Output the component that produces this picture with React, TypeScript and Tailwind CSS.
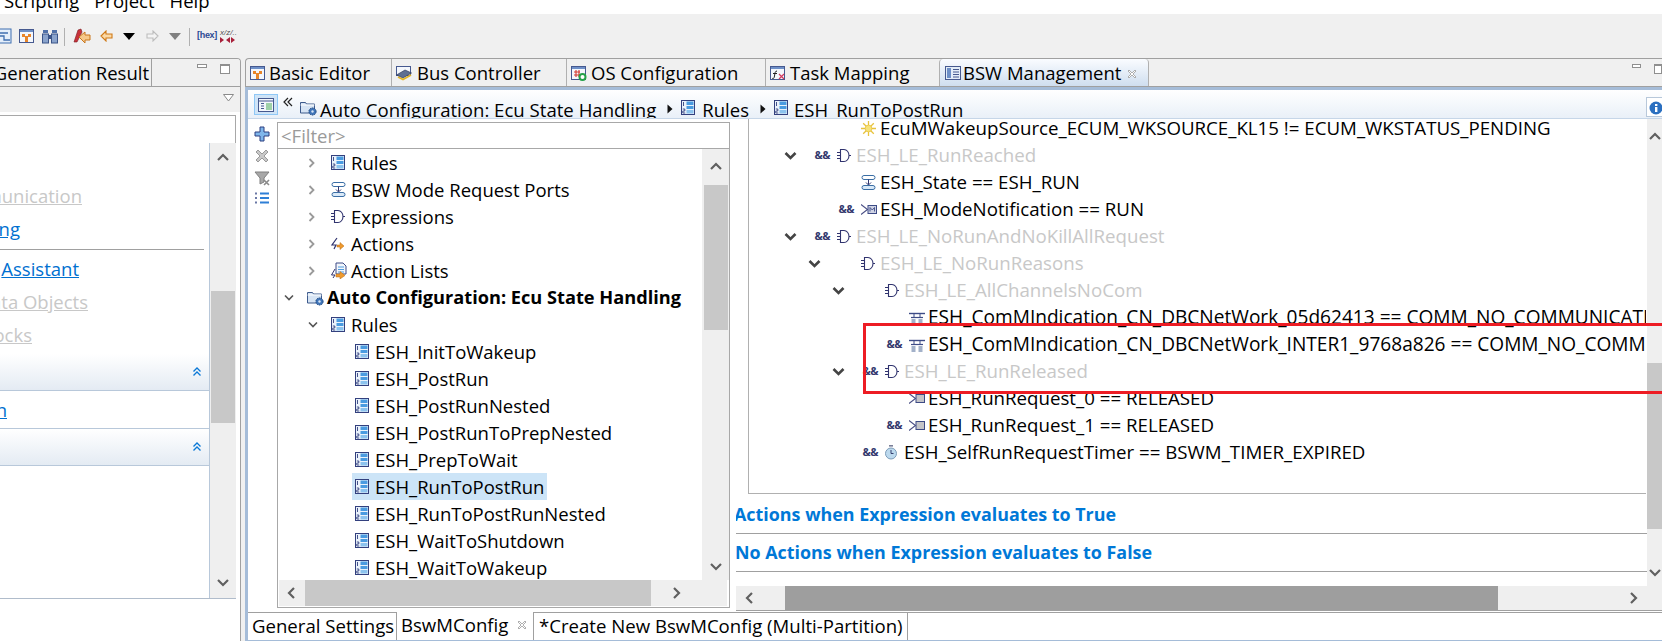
import React from "react";

const NAVY = "#30336e";

function Chevron({ dir, className = "" }: { dir: "up" | "down" | "left" | "right"; className?: string }) {
  const paths = {
    up: "M1 8 L6 3 L11 8",
    down: "M1 3 L6 8 L11 3",
    left: "M8 1 L3 6 L8 11",
    right: "M4 1 L9 6 L4 11",
  };
  return (
    <svg width="12" height="12" viewBox="0 0 12 12" className={className}>
      <path d={paths[dir]} fill="none" stroke="currentColor" strokeWidth="2.2" />
    </svg>
  );
}

function RuleIcon() {
  return (
    <svg width="14" height="15" viewBox="0 0 14 15">
      <rect x="0.5" y="0.5" width="13" height="14" fill="#eaf2fb" stroke="#33407e" />
      <path d="M2.5 2v4M1.8 9h2v2h-2v2h2.4" stroke="#33407e" fill="none" strokeWidth="0.9" />
      <rect x="5.5" y="1.5" width="7" height="3.5" fill="#4a9be0" />
      <rect x="5.5" y="6" width="7" height="3" fill="#4a9be0" />
      <rect x="5.5" y="10" width="7" height="3.5" fill="#8cc3ee" />
    </svg>
  );
}

function GateIcon() {
  return (
    <svg width="14" height="15" viewBox="0 0 14 15">
      <path d="M3.5 1.5h3.5a5 6 0 0 1 0 12h-3.5z M0 4.5h3.5M0 10.5h3.5M0 7.5h3.5M11.5 7.5h2.5" fill="none" stroke={NAVY} strokeWidth="1.1" />
    </svg>
  );
}

function ModeIcon() {
  return (
    <svg width="15" height="15" viewBox="0 0 15 15">
      <rect x="1" y="0.5" width="13" height="4" rx="2" fill="#fff" stroke="#3a6ea5" />
      <rect x="1" y="10.5" width="13" height="4" rx="2" fill="#d9e9f8" stroke="#3a6ea5" />
      <path d="M7.5 4.5v5M5 7.5l2.5 2.5 2.5-2.5" fill="none" stroke="#30356e" />
    </svg>
  );
}

function ActionIcon() {
  return (
    <svg width="14" height="14" viewBox="0 0 14 14">
      <path d="M6 1 L1 8 H5 L3 12" fill="none" stroke={NAVY} strokeWidth="1.2" />
      <path d="M6 8h3V5.5l4 3.5-4 3.5V10H6z" fill="#ef9a2e" stroke="#b86a10" strokeWidth="0.5" />
    </svg>
  );
}

function ActionListIcon() {
  return (
    <svg width="16" height="17" viewBox="0 0 16 17">
      <path d="M5 1h7l3 3v8H5z" fill="#f2f6fc" stroke="#3d4b86" />
      <path d="M7 5h6M7 7.5h6M7 10h6" stroke="#4f9bdc" />
      <path d="M4 7 L0.5 13 H4 L2 16" fill="none" stroke={NAVY} />
      <path d="M5 12h4V9.5l5 4-5 3.5V15H5z" fill="#ef9a2e" stroke="#b86a10" strokeWidth="0.5" />
    </svg>
  );
}

function FolderIcon() {
  return (
    <svg width="17" height="16" viewBox="0 0 17 16">
      <path d="M0.5 2.5h5l1 1.5h8v9h-14z" fill="#d6e4f4" stroke="#3d5a8c" />
      <path d="M0.5 5h14" stroke="#fff" />
      <circle cx="12.5" cy="11.5" r="3.6" fill="#3f74b8" stroke="#234a80" strokeDasharray="1.5 0.8" />
      <circle cx="12.5" cy="11.5" r="1.2" fill="#d6e4f4" />
    </svg>
  );
}

function SunIcon() {
  return (
    <svg width="15" height="15" viewBox="0 0 15 15">
      <path d="M7.5 0v15M0 7.5h15M2.2 2.2l10.6 10.6M12.8 2.2L2.2 12.8" stroke="#e8c33e" strokeWidth="1.3" />
      <circle cx="7.5" cy="7.5" r="3.4" fill="#f6e27a" stroke="#e3b92c" strokeWidth="0.6" />
    </svg>
  );
}

function ComIcon() {
  return (
    <svg width="16" height="15" viewBox="0 0 16 15">
      <path d="M0 3.5h16" stroke="#3d4b86" strokeWidth="1.4" />
      <path d="M2 7.5h12" stroke="#3d4b86" strokeWidth="1.2" />
      <path d="M5 3.5v4M11 3.5v4" stroke="#3d4b86" />
      <rect x="2.5" y="9" width="4" height="6" fill="#a3b1c9" />
      <rect x="9.5" y="9" width="4" height="6" fill="#a3b1c9" />
    </svg>
  );
}

function PortIcon({ m = false }: { m?: boolean }) {
  return (
    <svg width="16" height="13" viewBox="0 0 16 13">
      <path d="M0 1.5 L6.500 6.500 L0 11.5" fill="none" stroke="#4a4f85" strokeWidth="1.1" />
      <rect x="7" y="2.5" width="8.500" height="8" fill={m ? "#cfd3e4" : "#c4c4c8"} stroke="#3d4b86" />
      {m && <path d="M9 8.500v-4l2.250 2.500 2.250-2.500v4" fill="none" stroke="#3d4b86" strokeWidth="0.9" />}
    </svg>
  );
}

function ClockIcon() {
  return (
    <svg width="12" height="15" viewBox="0 0 12 15">
      <rect x="4" y="0" width="4" height="1.6" fill="#7a7f98" />
      <circle cx="6" cy="8.5" r="5.5" fill="#bcd9ee" stroke="#7d9cb8" />
      <path d="M6 5v3.5h2.5" fill="none" stroke="#34406f" />
    </svg>
  );
}

function WindowIcon({ children }: { children?: React.ReactNode }) {
  return (
    <svg width="16" height="16" viewBox="0 0 16 16">
      <rect x="0.5" y="1.5" width="14" height="13" fill="#f4f7fc" stroke="#46598f" />
      <rect x="1" y="2" width="13" height="2" fill="#6d8fc7" />
      {children}
    </svg>
  );
}

const BasicEditorIcon = () => (
  <WindowIcon>
    <path d="M3 6h3v2h3V6h3v3H9v5H6V9H3z" fill="#e8862a" />
  </WindowIcon>
);

const BusIcon = () => (
  <svg width="16" height="16" viewBox="0 0 16 16">
    <rect x="0.5" y="1.5" width="14" height="9" fill="#f4f7fc" stroke="#46598f" />
    <path d="M0.5 10 L9 5 L15.5 8 L7 13z" fill="#5e6f92" stroke="#323c5e" strokeWidth="0.7" />
    <path d="M2 12l5 2.5L15 10" fill="none" stroke="#e3b52a" strokeWidth="1.8" />
  </svg>
);

const OsIcon = () => (
  <WindowIcon>
    <path d="M3 7h6M3 10h6M5 5v7M8 5v7" stroke="#d43a2f" strokeWidth="1.1" />
    <circle cx="11.5" cy="12" r="3" fill="#fff" stroke="#24a148" strokeWidth="2" />
  </WindowIcon>
);

const TaskIcon = () => (
  <WindowIcon>
    <path d="M7 6C5 6 5 8 4.5 11S3 14 2 13M3 8.5h4" fill="none" stroke="#222" />
    <path d="M9 9l5 5M14 9l-5 5" stroke="#d43a5f" strokeWidth="1.2" />
  </WindowIcon>
);

const BswIcon = () => (
  <svg width="16" height="16" viewBox="0 0 16 16">
    <rect x="0.5" y="1.5" width="15" height="13" fill="#e3edf8" stroke="#46598f" />
    <rect x="2" y="3" width="4" height="10" fill="#6d8fc7" />
    <path d="M8 4.5h6M8 7h6M8 9.5h6M8 12h6" stroke="#46598f" />
  </svg>
);

function CloseMark() {
  return (
    <svg width="10" height="10" viewBox="0 0 10 10">
      <path d="M1 2l1-1 3 3 3-3 1 1-3 3 3 3-1 1-3-3-3 3-1-1 3-3z" fill="#fff" stroke="#9a9a9a" strokeWidth="0.8" />
    </svg>
  );
}

function MinMax() {
  return (
    <div className="flex items-start gap-[13px] pt-[5px]">
      <div className="w-[10px] h-[4px] border border-[#8f8f8f] bg-white" />
      <div className="w-[10px] h-[10px] border border-[#8f8f8f] border-t-2 bg-white" />
    </div>
  );
}

function Toolbar() {
  return (
    <div className="h-[44px] bg-[#f0f0f0] flex items-start pt-[14px] overflow-hidden shrink-0">
      <div className="w-[12px] h-[16px] overflow-hidden flex justify-end">
        <svg width="16" height="16" viewBox="0 0 16 16" className="shrink-0">
          <rect x="1" y="1" width="14" height="14" fill="#e4eefa" stroke="#3f6fb0" />
          <path d="M4 5h8M4 8h4v4h6" fill="none" stroke="#3f6fb0" strokeWidth="1.3" />
        </svg>
      </div>
      <div className="ml-[7px] w-[16px]">
        <BasicEditorIcon />
      </div>
      <svg width="16" height="16" viewBox="0 0 16 16" className="ml-[7px]">
        <rect x="1" y="2" width="5" height="3" fill="#5070a8" />
        <rect x="10" y="2" width="5" height="3" fill="#5070a8" />
        <rect x="0.5" y="6" width="6" height="9" fill="#8aa3cc" stroke="#3b5488" />
        <rect x="9.5" y="6" width="6" height="9" fill="#8aa3cc" stroke="#3b5488" />
        <rect x="6" y="7" width="4" height="4" fill="#3b5488" />
      </svg>
      <div className="ml-[6px] w-px h-[18px] bg-[#b0b0b0]" />
      <svg width="18" height="16" viewBox="0 0 18 16" className="ml-[8px]">
        <path d="M1 14 L5 2 L8 1 L9 4 L4 14z" fill="#c8323a" stroke="#7a1c22" strokeWidth="0.6" />
        <path d="M6 9l6-5v3h5v5h-5v3z" fill="#f6c98a" stroke="#c9761c" />
      </svg>
      <svg width="13" height="12" viewBox="0 0 13 12" className="ml-[9px] mt-[2px]">
        <path d="M1 6l5-5v3h6v4H6v3z" fill="#fbd9a6" stroke="#d07a18" strokeWidth="1.1" />
      </svg>
      <svg width="12" height="7" viewBox="0 0 12 7" className="ml-[10px] mt-[5px]">
        <path d="M0 0h12L6 7z" fill="#000" />
      </svg>
      <svg width="13" height="12" viewBox="0 0 13 12" className="ml-[11px] mt-[2px]">
        <path d="M12 6L7 1v3H1v4h6v3z" fill="#f4f4f4" stroke="#bdbdbd" strokeWidth="1.1" />
      </svg>
      <svg width="12" height="7" viewBox="0 0 12 7" className="ml-[10px] mt-[5px]">
        <path d="M0 0h12L6 7z" fill="#808080" />
      </svg>
      <div className="ml-[8px] w-px h-[18px] bg-[#b0b0b0]" />
      <div className="ml-[7px] w-[17px] h-[15px] text-[#2c4a94] font-['Liberation_Sans',sans-serif] text-[9px] leading-[15px] font-bold tracking-[-0.3px] whitespace-nowrap">
        [hex]
      </div>
      <div className="ml-[6px] w-[18px] font-['Liberation_Sans',sans-serif] text-[#555] text-[8px] leading-[9px] italic whitespace-nowrap">
        <div>x/z/..</div>
        <svg width="17" height="6" viewBox="0 0 17 6">
          <path d="M0 0l4 3-4 3zM10 0l-4 3 4 3zM11 0l4 3-4 3z" fill="#a8203a" />
        </svg>
      </div>
    </div>
  );
}

function ClippedLink({ right, muted, label }: { right: string; muted?: boolean; label: string }) {
  return (
    <div className={`${right} h-[33px] leading-[33px] flex justify-end underline whitespace-nowrap ${muted ? "text-[#c8c8c8]" : "text-[#0070d0]"}`}>
      <span className="shrink-0">{label}</span>
    </div>
  );
}

function SectionHead() {
  return (
    <div className="h-[37px] bg-gradient-to-b from-white to-[#e4ebf3] border-b border-[#b8c8da] flex justify-end items-center pr-[7px]">
      <svg width="10" height="10" viewBox="0 0 10 10">
        <path d="M1.5 4.5L5 1l3.5 3.5M1.5 8.5L5 5l3.5 3.5" fill="none" stroke="#0a78d6" strokeWidth="1.3" />
      </svg>
    </div>
  );
}

function LeftPanel() {
  return (
    <div className="w-[241px] h-full border-r border-[#a0a0a0] border-t rounded-tr-[4px] flex flex-col overflow-hidden shrink-0">
      <div className="h-[28px] flex border-b border-[#a0a0a0] bg-[#f0f0f0] shrink-0">
        <div className="w-[152px] border-r border-[#a0a0a0] overflow-hidden whitespace-nowrap leading-[27px] flex justify-end pr-[2px]">
          <span className="shrink-0">Generation Result</span>
        </div>
        <div className="ml-[45px]">
          <MinMax />
        </div>
      </div>
      <div className="h-[25px] bg-[#f0f0f0] flex justify-end pr-[6px] pt-[7px] shrink-0">
        <svg width="11" height="8" viewBox="0 0 11 8">
          <path d="M0.5 0.5h10L5.5 7z" fill="#fff" stroke="#8a8a8a" />
        </svg>
      </div>
      <div className="flex-1 bg-white pt-[3px] pr-[4px] flex flex-col min-h-0">
        <div className="h-[28px] border-t border-r border-[#a8a8a8] shrink-0" />
        <div className="h-[456px] flex border-b border-[#b0bccb] shrink-0">
          <div className="w-[210px] border-r border-[#b8c8da] flex flex-col">
            <div className="h-[211px] pt-[36px] overflow-hidden">
              <ClippedLink right="w-[82px]" muted label="Communication" />
              <ClippedLink right="w-[20px]" label="Mapping" />
              <div className="h-px bg-[#a0a0a0] mt-[4px] mr-[5px]" />
              <div className="mt-[2px]">
                <ClippedLink right="w-[79px]" label="Assistant" />
              </div>
              <ClippedLink right="w-[88px]" muted label="Data Objects" />
              <ClippedLink right="w-[32px]" muted label="Blocks" />
            </div>
            <SectionHead />
            <div className="h-[38px] border-b border-[#b8c8da] overflow-hidden pt-[2px]">
              <ClippedLink right="w-[7px]" label="Run" />
            </div>
            <SectionHead />
          </div>
          <div className="flex-1 bg-[#efefef] flex flex-col items-center justify-between py-[9px]">
            <Chevron dir="up" className="text-[#606060]" />
            <div className="w-[24px] h-[132px] bg-[#c8c8c8] mt-[120px] mb-[148px]" />
            <Chevron dir="down" className="text-[#606060]" />
          </div>
        </div>
      </div>
    </div>
  );
}

function EditorTabs() {
  const tabs = [
    { label: "Basic Editor", icon: <BasicEditorIcon />, cls: "w-[146px] gap-[3px] border-r border-[#b0b0b0]" },
    { label: "Bus Controller", icon: <BusIcon />, cls: "w-[175px] gap-[5px] border-r border-[#b0b0b0]" },
    { label: "OS Configuration", icon: <OsIcon />, cls: "w-[199px] gap-[4px] border-r border-[#b0b0b0]" },
    { label: "Task Mapping", icon: <TaskIcon />, cls: "w-[173px] gap-[4px]" },
  ];
  return (
    <div className="h-[29px] flex border-t border-l border-[#a0a0a0] rounded-tl-[4px] border-b bg-[#f0f0f0] shrink-0">
      {tabs.map((t) => (
        <div key={t.label} className={`${t.cls} h-full flex items-center pl-[4px] whitespace-nowrap`}>
          {t.icon}
          <span>{t.label}</span>
        </div>
      ))}
      <div className="w-[210px] h-full flex items-center pl-[5px] whitespace-nowrap border-x border-[#b0b0b0] bg-gradient-to-b from-[#fafcff] to-[#cfdeef] rounded-t-[4px]">
        <BswIcon />
        <span className="ml-[2px]">BSW Management</span>
        <span className="ml-[6px] mt-[2px]">
          <CloseMark />
        </span>
      </div>
      <div className="ml-auto w-[30px] overflow-hidden">
        <MinMax />
      </div>
    </div>
  );
}

function Crumb() {
  return (
    <svg width="6" height="10" viewBox="0 0 6 10" className="ml-[11px] mt-[8px] shrink-0">
      <path d="M0.5 0.5L5.5 5l-5 4.5z" fill="#111" />
    </svg>
  );
}

function EditorHeader() {
  return (
    <div className="h-[29px] border-b border-[#c6d6e8] bg-gradient-to-b from-white to-[#e9f0f8] flex overflow-hidden whitespace-nowrap shrink-0">
      <div className="ml-[6px] mt-[4px] w-[24px] h-[21px] bg-[#cfe4f7] border border-[#90c8f6] flex items-center justify-center">
        <svg width="16" height="14" viewBox="0 0 16 14">
          <rect x="0.5" y="0.5" width="15" height="13" fill="#f4f7fc" stroke="#46598f" />
          <path d="M1 3h14" stroke="#46598f" />
          <path d="M3 5.5h3M3 8h3M3 10.5h3" stroke="#46598f" />
          <rect x="8" y="5" width="6" height="7" fill="#9fd1a8" />
        </svg>
      </div>
      <svg width="10" height="10" viewBox="0 0 10 10" className="ml-[5px] mt-[7px]">
        <path d="M5 1L1 5l4 4M9 1L5 5l4 4" fill="none" stroke="#222" strokeWidth="1.2" />
      </svg>
      <div className="ml-[7px] mt-[10px]">
        <FolderIcon />
      </div>
      <div className="flex items-start pt-[6px] h-[36px]">
        <span className="ml-[3px] text-[18.6px]">Auto Configuration: Ecu State Handling</span>
        <Crumb />
        <span className="mt-[4px] ml-[8px]"><RuleIcon /></span>
        <span className="ml-[7px]">Rules</span>
        <Crumb />
        <span className="mt-[4px] ml-[8px]"><RuleIcon /></span>
        <span className="ml-[6px]">ESH_RunToPostRun</span>
      </div>
      <div className="ml-auto mt-[7px] w-[16px] h-[20px] border-l border-y border-[#b8c8da] bg-white pl-[2px] pt-[3px]">
        <svg width="14" height="14" viewBox="0 0 14 14">
          <circle cx="7" cy="7" r="6.5" fill="#2a6fc0" />
          <rect x="6" y="6" width="2.4" height="5" fill="#fff" />
          <rect x="6" y="3" width="2.4" height="2" fill="#fff" />
        </svg>
      </div>
    </div>
  );
}

function ToolStrip() {
  return (
    <div className="w-[29px] shrink-0 flex flex-col items-center gap-[6px] pt-[7px] pr-[2px]">
      <svg width="16" height="16" viewBox="0 0 16 16">
        <path d="M6 1h4v5h5v4h-5v5H6v-5H1V6h5z" fill="#7fb6ea" stroke="#2c3f80" />
      </svg>
      <svg width="16" height="16" viewBox="0 0 16 16">
        <path d="M2 4l2-2 4 4 4-4 2 2-4 4 4 4-2 2-4-4-4 4-2-2 4-4z" fill="#c8c8c8" stroke="#9a9a9a" />
      </svg>
      <svg width="16" height="16" viewBox="0 0 16 16">
        <path d="M1 2h14L10 8v4l-4 2V8z" fill="#a8a8a8" stroke="#808080" />
        <path d="M10 10l5 5M15 10l-5 5" stroke="#8a8a8a" strokeWidth="1.6" />
      </svg>
      <svg width="14" height="12" viewBox="0 0 14 12">
        <path d="M5 1.5h9M5 6h9M5 10.5h9" stroke="#2f7fd6" strokeWidth="2" />
        <path d="M1 0.5v2M1 5v2M1 9.5v2" stroke="#2c3f80" strokeWidth="1.4" />
      </svg>
    </div>
  );
}

type LeftRow = {
  level: number;
  label: string;
  icon: React.ReactNode;
  open?: boolean;
  closed?: boolean;
  bold?: boolean;
  selected?: boolean;
};

const leftIndent = ["w-0", "w-[24px]", "w-[48px]"];

const leftRows: LeftRow[] = [
  { level: 1, label: "Rules", icon: <RuleIcon />, closed: true },
  { level: 1, label: "BSW Mode Request Ports", icon: <ModeIcon />, closed: true },
  { level: 1, label: "Expressions", icon: <GateIcon />, closed: true },
  { level: 1, label: "Actions", icon: <ActionIcon />, closed: true },
  { level: 1, label: "Action Lists", icon: <ActionListIcon />, closed: true },
  { level: 0, label: "Auto Configuration: Ecu State Handling", icon: <FolderIcon />, open: true, bold: true },
  { level: 1, label: "Rules", icon: <RuleIcon />, open: true },
  { level: 2, label: "ESH_InitToWakeup", icon: <RuleIcon /> },
  { level: 2, label: "ESH_PostRun", icon: <RuleIcon /> },
  { level: 2, label: "ESH_PostRunNested", icon: <RuleIcon /> },
  { level: 2, label: "ESH_PostRunToPrepNested", icon: <RuleIcon /> },
  { level: 2, label: "ESH_PrepToWait", icon: <RuleIcon /> },
  { level: 2, label: "ESH_RunToPostRun", icon: <RuleIcon />, selected: true },
  { level: 2, label: "ESH_RunToPostRunNested", icon: <RuleIcon /> },
  { level: 2, label: "ESH_WaitToShutdown", icon: <RuleIcon /> },
  { level: 2, label: "ESH_WaitToWakeup", icon: <RuleIcon /> },
];

function NavTree() {
  return (
    <div className="w-[453px] shrink-0 mt-[3px] h-[486px] border border-[#a8a8a8] flex flex-col">
      <div className="h-[26px] border-b border-[#a8a8a8] text-[#9a9a9a] pl-[3px] leading-[25px] shrink-0">&lt;Filter&gt;</div>
      <div className="flex h-[431px] shrink-0">
        <div className="w-[424px] overflow-hidden pl-[1px]">
          {leftRows.map((r, i) => (
            <div key={i} className="h-[27px] flex items-center whitespace-nowrap">
              <div className={`${leftIndent[r.level]} shrink-0`} />
              <div className="w-[25px] shrink-0 pl-[5px] flex items-center">
                {r.closed && (
                  <svg width="8" height="10" viewBox="0 0 8 10">
                    <path d="M1.5 1l4 4-4 4" fill="none" stroke="#9a9a9a" strokeWidth="1.8" />
                  </svg>
                )}
                {r.open && (
                  <svg width="10" height="8" viewBox="0 0 10 8">
                    <path d="M1 1.5l4 4 4-4" fill="none" stroke="#555" strokeWidth="1.6" />
                  </svg>
                )}
              </div>
              <div className={`h-[27px] pl-[3px] pr-[3px] flex items-center ${r.selected ? "bg-[#cce4f7]" : ""}`}>
                <div className="w-[21px] shrink-0 flex items-center">{r.icon}</div>
                <span className={r.bold ? "font-bold ml-[-1px] text-[18.2px]" : "ml-[-1px]"}>{r.label}</span>
              </div>
            </div>
          ))}
        </div>
        <div className="flex-1 bg-[#efefef] flex flex-col items-center">
          <div className="h-[36px] flex items-center"><Chevron dir="up" className="text-[#606060]" /></div>
          <div className="w-[24px] h-[145px] bg-[#c8c8c8]" />
          <div className="mt-auto h-[26px] flex items-center"><Chevron dir="down" className="text-[#606060]" /></div>
        </div>
      </div>
      <div className="h-[26px] flex bg-[#efefef] mr-[2px] ml-[1px] items-center shrink-0">
        <div className="w-[26px] flex justify-center"><Chevron dir="left" className="text-[#606060]" /></div>
        <div className="w-[346px] h-full bg-[#c8c8c8]" />
        <div className="flex-1 flex justify-center pr-[26px]"><Chevron dir="right" className="text-[#606060]" /></div>
      </div>
    </div>
  );
}

type RightRow = {
  level: number;
  label: string;
  icon: React.ReactNode;
  open?: boolean;
  and?: boolean;
  muted?: boolean;
  wide?: boolean;
};

const rightIndent = ["w-0", "w-[24px]", "w-[48px]", "w-[72px]"];

const rightRows: RightRow[] = [
  { level: 1, label: "EcuMWakeupSource_ECUM_WKSOURCE_KL15 != ECUM_WKSTATUS_PENDING", icon: <SunIcon /> },
  { level: 0, label: "ESH_LE_RunReached", icon: <GateIcon />, open: true, and: true, muted: true },
  { level: 1, label: "ESH_State == ESH_RUN", icon: <ModeIcon /> },
  { level: 1, label: "ESH_ModeNotification == RUN", icon: <PortIcon m />, and: true },
  { level: 0, label: "ESH_LE_NoRunAndNoKillAllRequest", icon: <GateIcon />, open: true, and: true, muted: true },
  { level: 1, label: "ESH_LE_NoRunReasons", icon: <GateIcon />, open: true, muted: true },
  { level: 2, label: "ESH_LE_AllChannelsNoCom", icon: <GateIcon />, open: true, muted: true },
  { level: 3, label: "ESH_ComMIndication_CN_DBCNetWork_05d62413 == COMM_NO_COMMUNICATION", icon: <ComIcon />, wide: true },
  { level: 3, label: "ESH_ComMIndication_CN_DBCNetWork_INTER1_9768a826 == COMM_NO_COMMUNICATION", icon: <ComIcon />, and: true, wide: true },
  { level: 2, label: "ESH_LE_RunReleased", icon: <GateIcon />, open: true, and: true, muted: true },
  { level: 3, label: "ESH_RunRequest_0 == RELEASED", icon: <PortIcon /> },
  { level: 3, label: "ESH_RunRequest_1 == RELEASED", icon: <PortIcon />, and: true },
  { level: 2, label: "ESH_SelfRunRequestTimer == BSWM_TIMER_EXPIRED", icon: <ClockIcon />, and: true },
];

function ExprTree() {
  return (
    <div className="ml-[12px] mr-[1px] h-[375px] border-l border-b border-[#b0b0b0] overflow-hidden pl-[35px] text-[18.7px]">
      <div className="mt-[-4px]">
        {rightRows.map((r, i) => (
          <div key={i} className="h-[27px] flex items-center whitespace-nowrap">
            <div className={`${rightIndent[r.level]} shrink-0`} />
            <div className="w-[21px] shrink-0 flex items-center">
              {r.open && (
                <svg width="14" height="10" viewBox="0 0 14 10">
                  <path d="M1.5 2l5 5 5-5" fill="none" stroke="#444" strokeWidth="2.6" />
                </svg>
              )}
            </div>
            <div className="w-[32px] shrink-0 pr-[7px] text-right text-[11px] text-[#34396e] font-bold tracking-[-0.5px]">
              {r.and ? "&&" : ""}
            </div>
            <div className="w-[21px] shrink-0 flex items-center">{r.icon}</div>
            <span className={`ml-[-2px] ${r.muted ? "text-[#c8c8c8]" : ""} ${r.wide ? "text-[19.1px]" : ""}`}>{r.label}</span>
          </div>
        ))}
      </div>
    </div>
  );
}

function ExprPane() {
  return (
    <div className="flex-1 min-w-0 flex flex-col overflow-hidden">
      <div className="flex h-[467px] shrink-0">
        <div className="w-[911px] shrink-0 overflow-hidden text-[17.9px]">
          <ExprTree />
          <div className="h-[40px] border-b border-[#a0a0a0] font-bold text-[#0078d7] leading-[40px] whitespace-nowrap overflow-hidden">
            <span className="block ml-[-2px]">Actions when Expression evaluates to True</span>
          </div>
          <div className="h-[38px] border-b border-[#a0a0a0] font-bold text-[#0078d7] leading-[37px] whitespace-nowrap overflow-hidden">
            <span className="block ml-[-1px]">No Actions when Expression evaluates to False</span>
          </div>
        </div>
        <div className="flex-1 bg-[#efefef] flex flex-col overflow-hidden">
          <div className="h-[244px] flex items-start pt-[12px] pl-[2px]"><Chevron dir="up" className="text-[#606060]" /></div>
          <div className="h-[166px] bg-[#c8c8c8] shrink-0" />
          <div className="mt-[38px] pl-[2px]"><Chevron dir="down" className="text-[#606060]" /></div>
        </div>
      </div>
      <div className="h-[25px] bg-[#efefef] border-b border-[#a0a0a0] flex items-center shrink-0">
        <div className="w-[49px] pl-[8px]"><Chevron dir="left" className="text-[#606060]" /></div>
        <div className="w-[713px] h-full bg-[#9e9e9e]" />
        <div className="w-[141px] flex justify-end"><Chevron dir="right" className="text-[#606060]" /></div>
      </div>
    </div>
  );
}

function BottomTabs() {
  return (
    <div className="h-[29px] flex items-stretch whitespace-nowrap bg-white border-b border-[#a5bcd8] shrink-0 text-[18.6px]">
      <div className="w-[149px] border-r border-t border-[#a0a0a0] pl-[4px] leading-[25px]">General Settings</div>
      <div className="w-[137px] pl-[4px] pb-[2px] border-r border-[#a0a0a0] flex items-center gap-[9px]">
        <span>BswMConfig</span>
        <CloseMark />
      </div>
      <div className="w-[374px] border-r border-t border-[#a0a0a0] pl-[5px] leading-[25px]">*Create New BswMConfig (Multi-Partition)</div>
      <div className="flex-1 border-t border-[#a0a0a0]" />
    </div>
  );
}

export default function App() {
  return (
    <div className="w-[1662px] h-[641px] overflow-hidden bg-[#f0f0f0] text-black flex flex-col font-['Open_Sans',sans-serif] text-[18.5px]">
      <div className="h-[14px] bg-white overflow-hidden leading-[14px] shrink-0 whitespace-nowrap">
        <div className="mt-[-6px] flex pl-[4px] gap-[15px]">
          <span>Scripting</span>
          <span>Project</span>
          <span>Help</span>
        </div>
      </div>
      <Toolbar />
      <div className="flex h-[583px] shrink-0">
        <LeftPanel />
        <div className="w-[4px] shrink-0" />
        <div className="flex-1 min-w-0 flex flex-col relative">
          <EditorTabs />
          <div className="flex-1 min-h-0 border-l-[3px] border-t-[3px] border-[#a5bcd8] bg-white flex flex-col">
            <EditorHeader />
            <div className="flex flex-1 min-h-0">
              <ToolStrip />
              <NavTree />
              <div className="w-[6px] shrink-0" />
              <ExprPane />
            </div>
            <BottomTabs />
          </div>
          {/* annotation drawn over the screenshot */}
          <div className="absolute left-[618px] top-[265px] w-[830px] h-[71px] border-[3px] border-[#ed1c24]" />
        </div>
      </div>
    </div>
  );
}
